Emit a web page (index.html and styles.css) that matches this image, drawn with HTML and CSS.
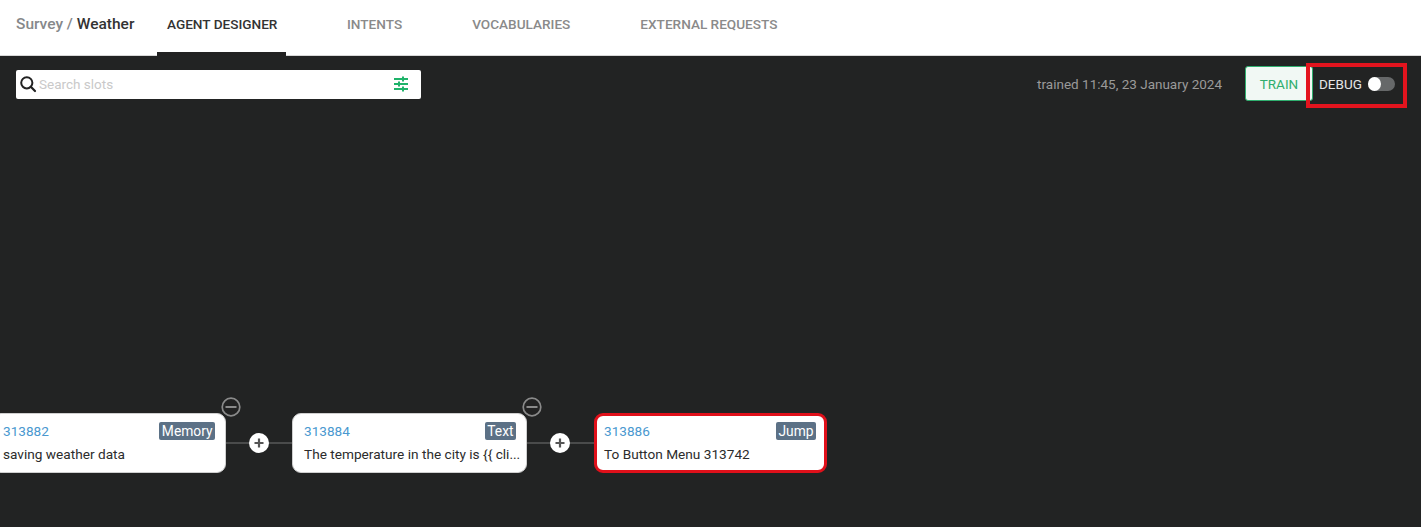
FILE: index.html
```html
<!DOCTYPE html>
<html lang="en">
<head>
<meta charset="utf-8">
<title>Survey / Weather</title>
<link rel="stylesheet" href="styles.css">
</head>
<body>
<header class="topbar">
  <div class="crumbs"><span class="crumb-parent">Survey / </span><span class="crumb-current">Weather</span></div>
  <nav class="tabs">
    <a class="tab tab-active">AGENT DESIGNER</a>
    <a class="tab">INTENTS</a>
    <a class="tab">VOCABULARIES</a>
    <a class="tab">EXTERNAL REQUESTS</a>
  </nav>
</header>
<main class="canvas">
  <div class="toolbar">
    <div class="search">
      <svg class="search-icon" viewBox="0 0 18 18" width="18" height="18"><circle cx="7.8" cy="7.8" r="5.6" fill="none" stroke="#222" stroke-width="2"/><path d="M11.8 11.8 16 16" stroke="#222" stroke-width="2.2" stroke-linecap="round"/></svg>
      <span class="search-text">Search slots</span>
      <svg class="filter-icon" viewBox="0 0 14 16" width="14" height="16"><g stroke="#1fb36a" fill="none" stroke-width="2"><path d="M0 3h14M0 8h14M0 13h14"/><path d="M9 0.500v5M5 5.500v5M9 10.500v5"/></g></svg>
    </div>
    <div class="actions">
      <span class="trained">trained 11:45, 23 January 2024</span>
      <button class="train">TRAIN</button>
      <div class="debug">
        <span class="debug-label">DEBUG</span>
        <span class="switch"><span class="knob"></span></span>
      </div>
    </div>
  </div>

  <div class="line line-a"></div>
  <div class="line line-b"></div>

  <div class="node node-a">
    <div class="node-head"><span class="node-id">313882</span><span class="node-type">Memory</span></div>
    <div class="node-text">saving weather data</div>
  </div>
  <div class="node node-b">
    <div class="node-head"><span class="node-id">313884</span><span class="node-type">Text</span></div>
    <div class="node-text">The temperature in the city is {{ cli...</div>
  </div>
  <div class="node node-c">
    <div class="node-head"><span class="node-id">313886</span><span class="node-type">Jump</span></div>
    <div class="node-text">To Button Menu 313742</div>
  </div>

  <svg class="minus minus-a" viewBox="0 0 20 20" width="20" height="20"><circle cx="10" cy="10" r="8.800" fill="#222" stroke="#8a8a8a" stroke-width="1.700"/><path d="M4.500 10h11" stroke="#8a8a8a" stroke-width="2"/></svg>
  <svg class="minus minus-b" viewBox="0 0 20 20" width="20" height="20"><circle cx="10" cy="10" r="8.800" fill="#222" stroke="#8a8a8a" stroke-width="1.700"/><path d="M4.500 10h11" stroke="#8a8a8a" stroke-width="2"/></svg>
  <svg class="plus plus-a" viewBox="0 0 20 20" width="20" height="20"><circle cx="10" cy="10" r="10" fill="#fff"/><path d="M5.500 10h9M10 5.500v9" stroke="#555" stroke-width="2.200"/></svg>
  <svg class="plus plus-b" viewBox="0 0 20 20" width="20" height="20"><circle cx="10" cy="10" r="10" fill="#fff"/><path d="M5.500 10h9M10 5.500v9" stroke="#555" stroke-width="2.200"/></svg>

  <div class="highlight"></div>
</main>
</body>
</html>
```

FILE: styles.css
```css
* { box-sizing: border-box; }
html, body { margin: 0; height: 100%; }
body {
  display: flex;
  flex-direction: column;
  width: 1421px;
  height: 527px;
  overflow: hidden;
  font-family: Roboto, "Liberation Sans", sans-serif;
  background: #222323;
}
.topbar {
  height: 56px;
  flex: none;
  display: flex;
  align-items: stretch;
  background: #fff;
  border-bottom: 1px solid #d8d8d8;
  padding-left: 16px;
}
.crumbs {
  width: 141px;
  padding-top: 15px;
  font-size: 15.500px;
  line-height: 18px;
  font-weight: 500;
  white-space: nowrap;
}
.crumb-parent { color: #86888a; }
.crumb-current { color: #333; }
.tabs { display: flex; }
.tab {
  padding: 17px 9px 0 10px;
  margin-right: 51px;
  margin-bottom: -1px;
  font-size: 13.600px;
  line-height: 15px;
  font-weight: 500;
  color: #8a8a8a;
  white-space: nowrap;
  border-bottom: 4px solid transparent;
}
.tab-active {
  width: 129px;
  color: #333;
  border-bottom-color: #222;
}
.canvas { position: relative; flex: 1; }
.toolbar {
  display: flex;
  justify-content: space-between;
  align-items: center;
  padding: 11px 15px 0 16px;
}
.search {
  width: 405px;
  height: 29px;
  display: flex;
  align-items: center;
  background: #fff;
  border-radius: 2px;
  padding: 0 13px 0 3px;
}
.search-text {
  margin-left: 2px;
  flex: 1;
  font-size: 13.500px;
  color: #c9c9c9;
}
.actions { display: flex; align-items: center; margin-top: -1px; }
.trained {
  font-size: 13.500px;
  color: #9a9a9a;
  margin-right: 23px;
  margin-left: 1px;
}
.train {
  width: 68px;
  height: 35px;
  padding: 0;
  font: 400 13.500px Roboto, "Liberation Sans", sans-serif;
  color: #2fae6e;
  background: #f1f8f4;
  border: 1px solid #2fae6e;
  border-radius: 3px;
}
.debug {
  display: flex;
  align-items: center;
  margin-left: 6px;
  width: 87px;
}
.debug-label { font-size: 13.500px; color: #e6e6e6; }
.switch {
  position: relative;
  width: 27px;
  height: 14px;
  margin-left: 6px;
  background: #666869;
  border-radius: 7px;
}
.knob {
  position: absolute;
  left: 0;
  top: 0;
  width: 13px;
  height: 14px;
  background: #fff;
  border-radius: 50%;
}
.highlight {
  position: absolute;
  left: 1306px;
  top: 7px;
  width: 101px;
  height: 45px;
  border: 4px solid #e3141e;
}
.node {
  position: absolute;
  top: 357px;
  width: 235px;
  height: 60px;
  padding: 8px 4px 0 10px;
  background: #fff;
  border-radius: 9px;
  border: 1px solid #cfcfcf;
}
.node-a { left: -8px; width: 234px; }
.node-b { left: 292px; padding-left: 11px; }
.node-c {
  left: 594px;
  width: 233px;
  padding: 6px 8px 0 7px;
  border: 3px solid #e0101a;
}
.node-head {
  display: flex;
  justify-content: space-between;
  align-items: center;
  height: 18px;
  padding-right: 6px;
}
.node-c .node-head { padding-right: 0; }
.node-id { font-size: 13.600px; color: #4a98cf; }
.node-type {
  padding: 0 2.500px;
  height: 18px;
  line-height: 18px;
  font-size: 13.800px;
  color: #fff;
  background: #5c7186;
  border-radius: 2px;
}
.node-text {
  margin-top: 6px;
  font-size: 13.650px;
  line-height: 16px;
  color: #2c2c2c;
  white-space: nowrap;
}
.line {
  position: absolute;
  top: 386px;
  height: 2px;
  background: #4a4b4b;
}
.line-a { left: 226px; width: 66px; }
.line-b { left: 527px; width: 67px; }
.minus, .plus { position: absolute; }
.minus { top: 341px; }
.minus-a { left: 221px; }
.minus-b { left: 522px; }
.plus { top: 377px; }
.plus-a { left: 249px; }
.plus-b { left: 550px; }
```
